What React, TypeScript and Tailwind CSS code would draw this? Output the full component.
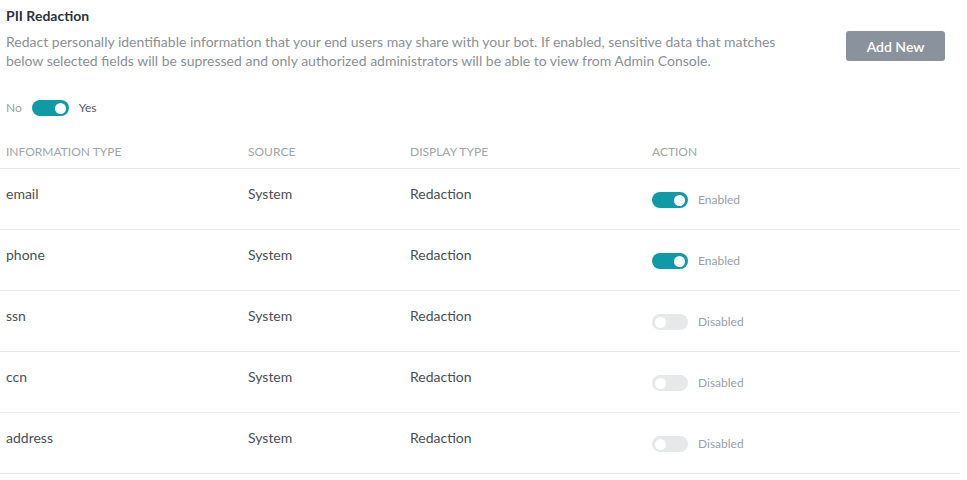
import React from "react";

const rows = [
  { type: "email", on: true },
  { type: "phone", on: true },
  { type: "ssn", on: false },
  { type: "ccn", on: false },
  { type: "address", on: false },
];

function Toggle({ on, big }: { on: boolean; big?: boolean }) {
  return (
    <span
      className={
        "relative inline-block rounded-full " +
        (big ? "w-[37px] h-[16px] " : "w-[36px] h-[16px] ") +
        (on ? "bg-[#0e9ba6]" : "bg-[#e6e8ea]")
      }
    >
      <span
        className={
          "absolute top-[2.5px] w-[11px] h-[11px] rounded-full bg-white " +
          (on ? "right-[3px]" : "left-[3px]")
        }
      />
    </span>
  );
}

export default function App() {
  return (
    <div
      className="w-[967px] h-[480px] bg-white overflow-hidden"
      style={{ fontFamily: "Lato, 'Open Sans', sans-serif" }}
    >
      <div className="pl-[6px] pt-[7px]">
        <div className="text-[14px] leading-[18px] font-bold text-[#2d3340]">PII Redaction</div>
        <div className="flex items-start mt-[7px]">
          <p className="w-[800px] text-[14px] leading-[19px] text-[#8b9096]">
            Redact personally identifiable information that your end users may share with your bot. If enabled, sensitive data that matches below selected fields will be supressed and only authorized administrators will be able to view from Admin Console.
          </p>
          <button className="ml-[40px] mt-[-1px] w-[99px] h-[30px] rounded-[3px] bg-[#8a939d] text-white text-[14px] font-semibold">
            Add New
          </button>
        </div>
        <div className="flex items-center mt-[30px] h-[16px] text-[12px] text-[#9aa0a6]">
          <span>No</span>
          <span className="ml-[10px] flex"><Toggle on big /></span>
          <span className="ml-[10px] text-[#555a60]">Yes</span>
        </div>
      </div>

      <div className="mt-[29px] w-[960px]">
        <div className="flex h-[24px] items-start text-[12px] leading-[14px] uppercase text-[#a0a4a8] border-b border-[#e8e9eb]">
          <div className="w-[248px] pl-[6px]">Information Type</div>
          <div className="w-[162px]">Source</div>
          <div className="w-[242px]">Display Type</div>
          <div>Action</div>
        </div>
        {rows.map((r) => (
          <div key={r.type} className="flex h-[61px] border-b border-[#e8e9eb] text-[14px] leading-[18px] text-[#4a4f55]">
            <div className="w-[248px] pl-[6px] pt-[16px]">{r.type}</div>
            <div className="w-[162px] pt-[16px]">System</div>
            <div className="w-[242px] pt-[16px]">Redaction</div>
            <div className="pt-[23px] flex items-start">
              <span className="flex"><Toggle on={r.on} /></span>
              <span className="ml-[10px] text-[12px] leading-[16px] text-[#9aa0a6]">
                {r.on ? "Enabled" : "Disabled"}
              </span>
            </div>
          </div>
        ))}
      </div>
    </div>
  );
}
